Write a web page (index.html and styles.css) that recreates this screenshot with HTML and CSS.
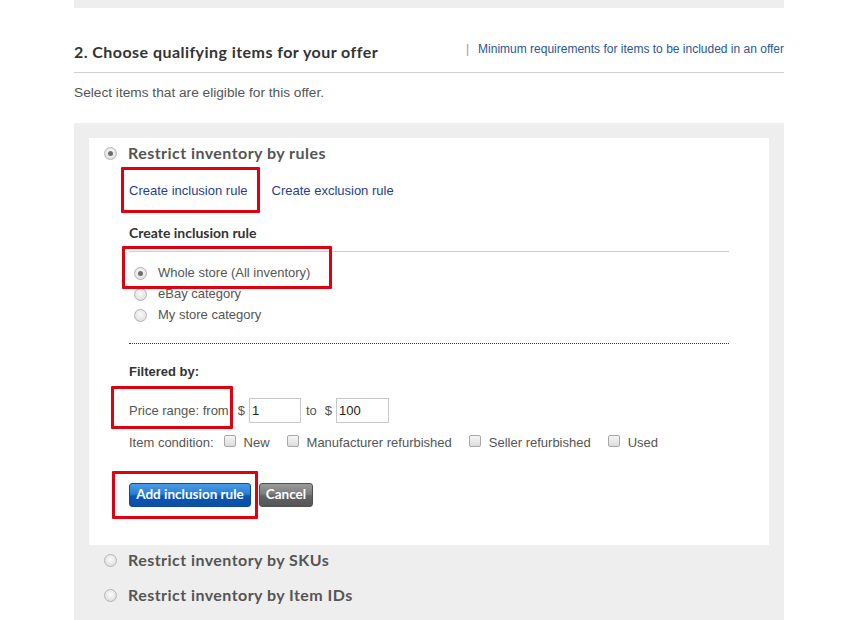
FILE: index.html
```html
<!DOCTYPE html>
<html>
<head>
<meta charset="utf-8">
<link rel="stylesheet" href="styles.css">
</head>
<body>
<div class="topbar"></div>
<div class="section">
  <div class="header">
    <h2 class="title">2. Choose qualifying items for your offer</h2>
    <div class="help"><span class="pipe">|</span><a class="help-link" href="#">Minimum requirements for items to be included in an offer</a></div>
  </div>
  <p class="intro">Select items that are eligible for this offer.</p>
  <div class="panel">
    <div class="card">
      <div class="option"><span class="radio checked"></span><span class="opt-label">Restrict inventory by rules</span></div>
      <div class="rules">
        <div class="tabs"><a class="tab" href="#">Create inclusion rule</a><a class="tab" href="#">Create exclusion rule</a></div>
        <h3 class="rule-title">Create inclusion rule</h3>
        <div class="scope">
          <div class="scope-row"><span class="radio small checked"></span><span>Whole store (All inventory)</span></div>
          <div class="scope-row"><span class="radio small"></span><span>eBay category</span></div>
          <div class="scope-row"><span class="radio small"></span><span>My store category</span></div>
        </div>
        <div class="filters">
          <h4 class="filter-title">Filtered by:</h4>
          <div class="price">
            <span class="lbl">Price range: from</span>
            <span class="cur">$</span><span class="field">1</span>
            <span class="to">to</span>
            <span class="cur">$</span><span class="field">100</span>
          </div>
          <div class="condition">
            <span class="lbl">Item condition:</span>
            <span class="check"></span><span class="ck-lbl">New</span>
            <span class="check"></span><span class="ck-lbl">Manufacturer refurbished</span>
            <span class="check"></span><span class="ck-lbl">Seller refurbished</span>
            <span class="check"></span><span class="ck-lbl">Used</span>
          </div>
        </div>
        <div class="actions">
          <button class="btn primary">Add inclusion rule</button>
          <button class="btn secondary">Cancel</button>
        </div>
      </div>
      <span class="mark m1"></span>
      <span class="mark m2"></span>
      <span class="mark m3"></span>
      <span class="mark m4"></span>
    </div>
    <div class="option outer first"><span class="radio"></span><span class="opt-label">Restrict inventory by SKUs</span></div>
    <div class="option outer"><span class="radio"></span><span class="opt-label">Restrict inventory by Item IDs</span></div>
  </div>
</div>
</body>
</html>
```

FILE: styles.css
```css
* { box-sizing: border-box; }
html, body { margin: 0; padding: 0; background: #fff; }
body {
  font-family: "Liberation Sans", Arial, sans-serif;
  font-size: 13px;
  color: #555;
  width: 855px;
  height: 620px;
  overflow: hidden;
}
.topbar {
  margin-left: 74px;
  width: 710px;
  height: 8px;
  background: #eeeeee;
}
.section {
  margin-left: 74px;
  width: 710px;
}
.header {
  margin-top: 34px;
  display: flex;
  justify-content: space-between;
  align-items: flex-start;
  border-bottom: 1px solid #cfcfcf;
  padding-bottom: 10px;
}
.title {
  margin: 0;
  font-family: Lato, "Open Sans", sans-serif;
  font-weight: 700;
  font-size: 16px;
  line-height: 20px;
  color: #333;
  letter-spacing: 0.45px;
}
.help {
  display: flex;
  align-items: center;
  font-size: 12px;
  line-height: 16px;
  margin-top: -1px;
}
.pipe { color: #999; margin-right: 9px; }
.help-link { color: #2a5599; text-decoration: none; }
.intro {
  margin: 12px 0 0;
  line-height: 16px;
  font-size: 13.7px;
  color: #555;
}
.panel {
  margin-top: 22px;
  background: #eeeeee;
  padding: 15px 15px 30px;
}
.card {
  position: relative;
  background: #fff;
  padding: 5px 0 38px 15px;
}
.option {
  display: flex;
  align-items: center;
  line-height: 20px;
}
.opt-label {
  margin-left: 11px;
  font-family: Lato, "Open Sans", sans-serif;
  font-weight: 700;
  font-size: 16px;
  color: #555;
  letter-spacing: 0.45px;
}
.outer { margin-left: 15px; margin-top: 15px; }
.outer.first { margin-top: 5px; }
.radio {
  display: inline-block;
  position: relative;
  width: 13px;
  height: 13px;
  border-radius: 50%;
  border: 1px solid #b4b4b4;
  background: radial-gradient(circle at 50% 40%, #fafafa 0%, #e6e6e6 60%, #d4d4d4 100%);
  flex: none;
}
.radio.checked::after {
  content: "";
  position: absolute;
  left: 3px;
  top: 3px;
  width: 5px;
  height: 5px;
  border-radius: 50%;
  background: #6e6e6e;
}
.rules {
  margin-left: 25px;
  margin-right: 40px;
}
.tabs {
  margin-top: 18px;
  line-height: 20px;
  display: flex;
  gap: 24px;
}
.tab { color: #1f3f8f; text-decoration: none; font-size: 13px; }
.rule-title {
  margin: 22px 0 0;
  font-family: Lato, "Open Sans", sans-serif;
  font-weight: 700;
  font-size: 14px;
  line-height: 20px;
  color: #333;
  padding-bottom: 8px;
  border-bottom: 1px solid #cfcfcf;
}
.scope {
  margin-top: 10px;
  padding-bottom: 18px;
  border-bottom: 1px dotted #333;
}
.scope-row {
  display: flex;
  align-items: center;
  height: 21px;
  padding-left: 5px;
  color: #555;
}
.scope-row .radio { margin-right: 11px; margin-top: 2px; }
.filter-title {
  margin: 18px 0 0;
  font-size: 13px;
  font-weight: 700;
  line-height: 20px;
  color: #333;
}
.price {
  margin-top: 16px;
  display: flex;
  align-items: center;
  height: 25px;
}
.cur { margin-left: 9px; margin-right: 4px; }
.to { margin-left: 5px; }
.to + .cur { margin-left: 8px; }
.field {
  display: inline-block;
  width: 52px;
  height: 25px;
  border: 1px solid #c8c8c8;
  padding: 3px 2px;
  line-height: 17px;
  color: #222;
  font-size: 13px;
}
.field:last-child { width: 53px; }
.condition {
  margin-top: 9px;
  display: flex;
  align-items: center;
  height: 20px;
}
.check {
  display: inline-block;
  width: 12px;
  height: 12px;
  border: 1px solid #a8a8a8;
  border-radius: 2px;
  background: linear-gradient(#f6f6f6, #dcdcdc);
  margin-left: 10px;
  margin-right: 8px;
  margin-top: -3px;
  flex: none;
}
.ck-lbl + .check { margin-left: 17px; }
.actions {
  margin-top: 31px;
  display: flex;
  gap: 8px;
}
.btn {
  font-family: Lato, "Open Sans", sans-serif;
  font-weight: 700;
  font-size: 13.5px;
  color: #fff;
  height: 24px;
  border-radius: 3px;
  padding: 0 4px 2px;
  line-height: 20px;
  cursor: pointer;
}
.primary {
  width: 122px;
  border: 1px solid #0d4a9a;
  background: linear-gradient(#4a9ce6 0%, #2a7dd6 45%, #0a57b4 55%, #0a4ea6 100%);
}
.secondary {
  width: 54px;
  border: 1px solid #505050;
  background: linear-gradient(#9a9a9a 0%, #7d7d7d 45%, #636363 55%, #555 100%);
}
.mark {
  position: absolute;
  border: 3px solid #e0000f;
  border-radius: 1px;
  pointer-events: none;
}
.m1 { left: 32px; top: 29px; width: 139px; height: 46px; }
.m2 { left: 33px; top: 108px; width: 210px; height: 43px; }
.m3 { left: 22px; top: 248px; width: 122px; height: 43px; }
.m4 { left: 23px; top: 333px; width: 146px; height: 48px; }
```
